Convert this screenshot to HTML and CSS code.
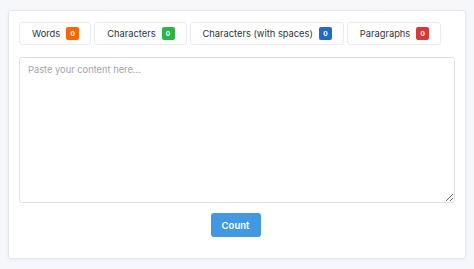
FILE: index.html
```html
<!DOCTYPE html>
<html lang="en">
<head>
<meta charset="utf-8">
<title>Word Counter</title>
<link rel="stylesheet" href="styles.css">
</head>
<body>
<div class="card">
  <div class="tabs">
    <div class="tab">Words <span class="badge orange">0</span></div>
    <div class="tab">Characters <span class="badge green">0</span></div>
    <div class="tab">Characters (with spaces) <span class="badge blue">0</span></div>
    <div class="tab">Paragraphs <span class="badge red">0</span></div>
  </div>
  <textarea class="input" placeholder="Paste your content here..."></textarea>
  <div class="actions">
    <button class="btn" type="button">Count</button>
  </div>
</div>
</body>
</html>
```
FILE: styles.css
```css
* { box-sizing: border-box; }
html, body { margin: 0; }
body {
  background: #f5f7fb;
  padding: 10px 8px 10px 8px;
  font-family: Inter, "Noto Sans", sans-serif;
  color: #2f343b;
}
.card {
  background: #fff;
  border: 1px solid #e6e8ec;
  border-radius: 3px;
  box-shadow: 0 1px 3px rgba(30, 41, 59, 0.06);
  padding: 11px 10px 21px 10px;
}
.tabs {
  display: flex;
  gap: 3px;
}
.tab {
  display: flex;
  align-items: center;
  gap: 6px;
  height: 23px;
  padding: 0 11px 0 12px;
  border: 1px solid #e9ebef;
  border-radius: 3px;
  font-size: 9.3px;
  color: #2f343b;
  white-space: nowrap;
}
.badge {
  display: inline-flex;
  align-items: center;
  justify-content: center;
  width: 13px;
  height: 13px;
  border-radius: 2px;
  color: #fff;
  font-size: 6.5px;
  font-weight: 700;
}
.orange { background: #f76707; }
.green { background: #2fb344; }
.blue { background: #206bc4; }
.red { background: #d63939; }
.input {
  display: block;
  width: 100%;
  height: 146px;
  margin-top: 12px;
  padding: 6px 8px;
  border: 1px solid #dfe2e7;
  border-radius: 3px;
  font-family: Inter, "Noto Sans", sans-serif;
  font-size: 9.3px;
  color: #2f343b;
  resize: vertical;
  outline: none;
}
.input::placeholder { color: #a0a5ad; }
.actions {
  display: flex;
  justify-content: center;
  margin-top: 10px;
  padding-right: 3px;
}
.btn {
  width: 50px;
  height: 24px;
  border: none;
  border-radius: 3px;
  background: #4299e1;
  color: #fff;
  font-family: Inter, "Noto Sans", sans-serif;
  font-size: 9.5px;
  font-weight: 600;
}
```
